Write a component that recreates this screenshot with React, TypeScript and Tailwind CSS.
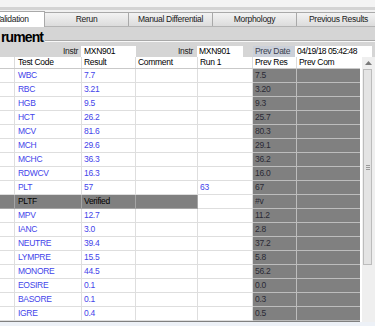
import React from "react";

const rows: { code: string; res: string; run?: string; prev: string; flag?: boolean }[] = [
  { code: "WBC", res: "7.7", prev: "7.5" },
  { code: "RBC", res: "3.21", prev: "3.20" },
  { code: "HGB", res: "9.5", prev: "9.3" },
  { code: "HCT", res: "26.2", prev: "25.7" },
  { code: "MCV", res: "81.6", prev: "80.3" },
  { code: "MCH", res: "29.6", prev: "29.1" },
  { code: "MCHC", res: "36.3", prev: "36.2" },
  { code: "RDWCV", res: "16.3", prev: "16.0" },
  { code: "PLT", res: "57", run: "63", prev: "67" },
  { code: "PLTF", res: "Verified", prev: "#v", flag: true },
  { code: "MPV", res: "12.7", prev: "11.2" },
  { code: "IANC", res: "3.0", prev: "2.8" },
  { code: "NEUTRE", res: "39.4", prev: "37.2" },
  { code: "LYMPRE", res: "15.5", prev: "5.8" },
  { code: "MONORE", res: "44.5", prev: "56.2" },
  { code: "EOSIRE", res: "0.1", prev: "0.0" },
  { code: "BASORE", res: "0.1", prev: "0.3" },
  { code: "IGRE", res: "0.4", prev: "0.5" },
];

function Tab({ label, w }: { label: string; w: string }) {
  return (
    <div
      className={`${w} h-[14px] shrink-0 flex items-center justify-center border border-b-0 border-l-0 border-[#a9a9a9] bg-gradient-to-b from-[#f3f3f3] to-[#dcdcdc] text-[#1a1a1a]`}
    >
      {label}
    </div>
  );
}

export default function App() {
  return (
    <div className="w-[375px] h-[326px] overflow-hidden bg-[#d5d5d5] font-['Liberation_Sans',Arial,sans-serif] text-[8.5px] tracking-[-0.3px] flex flex-col">
      {/* top strip */}
      <div className="h-[7px] bg-[#f4f4f4] shrink-0" />
      <div className="h-[3px] bg-[#d4d4d4] shrink-0" />
      {/* tabs */}
      <div className="h-[17px] shrink-0 bg-[#f1f1f1] flex items-end border-b border-[#b4b4b4]">
        <div className="w-[45px] h-[16px] shrink-0 bg-white border-r border-t border-[#a9a9a9] flex items-center overflow-hidden -mb-px">
          <span className="-ml-[5px] text-[#1a1a1a]">Validation</span>
        </div>
        <Tab label="Rerun" w="w-[84px]" />
        <Tab label="Manual Differential" w="w-[84px]" />
        <Tab label="Morphology" w="w-[84px]" />
        <Tab label="Previous Results" w="w-[84px]" />
      </div>
      {/* group caption */}
      <div className="h-[18px] shrink-0 flex items-end">
        <span className="ml-[1px] text-[14px] font-bold leading-[15px] tracking-[-0.9px] text-black">rument</span>
        <div className="flex-1 mb-[3px] ml-[2px] flex flex-col">
          <div className="h-px bg-[#a8a8a8]" />
          <div className="h-px bg-[#f8f8f8]" />
        </div>
      </div>
      {/* instr row */}
      <div className="h-[11px] shrink-0 flex items-stretch leading-[11px] mt-px">
        <div className="w-[78px] text-right text-[#222]">Instr</div>
        <div className="w-[3px]" />
        <div className="w-[55px] bg-white pl-[3px] text-black">MXN901</div>
        <div className="w-[57px] text-right text-[#222]">Instr</div>
        <div className="w-[4px]" />
        <div className="w-[46px] bg-white pl-[2px] text-black">MXN901</div>
        <div className="w-[10px]" />
        <div className="w-[42px] bg-[#cbd0d9] pl-[2px] text-[#3a4050]">Prev Date</div>
        <div className="w-[77px] bg-white pl-[2px] text-black tracking-[-0.5px]">04/19/18 05:42:48</div>
      </div>
      {/* grid */}
      <div className="flex shrink-0 h-[265px]">
        <div className="w-[360px] flex flex-col bg-white">
          <div className="h-[12px] flex border-b border-[#c9c9c9] leading-[11px] text-black">
            <div className="w-[15px] border-r border-[#dcdcdc]" />
            <div className="w-[67px] border-r border-[#dcdcdc] pl-[3px]">Test Code</div>
            <div className="w-[54px] border-r border-[#dcdcdc] pl-[2px]">Result</div>
            <div className="w-[62px] border-r border-[#dcdcdc] pl-[2px]">Comment</div>
            <div className="w-[55px] border-r border-[#dcdcdc] pl-[2px]">Run 1</div>
            <div className="w-[44px] border-r border-[#dcdcdc] pl-[2px]">Prev Res</div>
            <div className="w-[63px] pl-[2px]">Prev Com</div>
          </div>
          {rows.map((r) => {
            const left = r.flag
              ? "bg-[#808080] border-[#a5a5a5] text-black"
              : "bg-white border-[#dedede] text-[#4343ea]";
            return (
              <div key={r.code} className="h-[14px] flex leading-[13px]">
                <div className={`w-[15px] border-r border-b ${left}`} />
                <div className={`w-[67px] border-r border-b pl-[3px] ${left}`}>{r.code}</div>
                <div className={`w-[54px] border-r border-b pl-[2px] ${left}`}>{r.res}</div>
                <div className={`w-[62px] border-r border-b ${left}`} />
                <div className="w-[55px] border-r border-b border-[#dedede] bg-white pl-[2px] text-[#4343ea]">
                  {r.run ?? ""}
                </div>
                <div className="w-[44px] border-r border-b border-[#bdbdbd] bg-[#808080] pl-[2px] text-[#2a2a35]">
                  {r.prev}
                </div>
                <div className="w-[63px] border-b border-[#bdbdbd] bg-[#808080]" />
              </div>
            );
          })}
          <div className="flex-1 bg-[#808080]" />
        </div>
        {/* scrollbar */}
        <div className="w-[15px] flex flex-col bg-[#efefef] border-l-2 border-white">
          <div className="h-[12px] flex items-center justify-center">
            <svg width="7" height="4" viewBox="0 0 7 4">
              <path d="M0 4 L3.5 0 L7 4 Z" fill="#7a7a7a" />
            </svg>
          </div>
          <div className="ml-[1px] w-[9px] h-[196px] bg-[#e4e4e4] border border-[#bcbcbc] flex flex-col items-center justify-center gap-[1px]">
            <div className="w-[4px] h-px bg-[#9a9a9a]" />
            <div className="w-[4px] h-px bg-[#9a9a9a]" />
            <div className="w-[4px] h-px bg-[#9a9a9a]" />
          </div>
          <div className="flex-1" />
        </div>
      </div>
      <div className="flex-1 bg-[#edf1f7]" />
    </div>
  );
}
